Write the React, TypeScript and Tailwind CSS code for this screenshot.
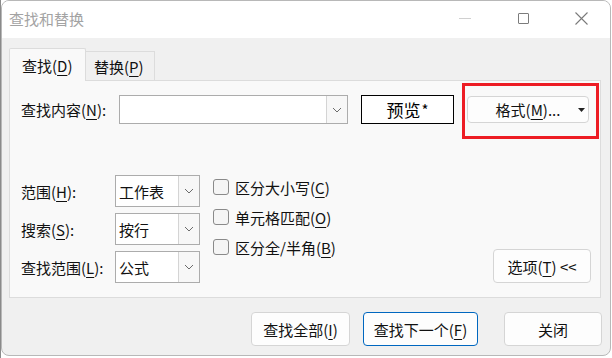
import React from "react";

const FONT = { fontFamily: '"Noto Sans CJK SC", "Noto Sans", sans-serif' };

function U({ c }: { c: string }) {
  return <span className="underline underline-offset-[3px] decoration-1">{c}</span>;
}

function Chevron() {
  return (
    <svg width="10" height="6" viewBox="0 0 10 6" fill="none">
      <path d="M1 1 L5 5 L9 1" stroke="#6b6b6b" strokeWidth="1" />
    </svg>
  );
}

function Select({ text, w, h }: { text: string; w: number; h: number }) {
  return (
    <div
      className="flex border border-[#acacac] bg-white"
      style={{ width: w, height: h }}
    >
      <div className="flex-1 flex items-center pl-[3px] text-[15px] leading-none text-[#111]">{text}</div>
      <div className="w-[21px] border-l border-[#d4d4d4] bg-[#f7f7f7] flex items-center justify-center">
        <Chevron />
      </div>
    </div>
  );
}

function Check({ children }: { children: React.ReactNode }) {
  return (
    <div className="flex items-center h-[16px]">
      <div className="w-[16px] h-[16px] rounded-[3px] border border-[#8a8a8a] bg-[#f5f5f5]" />
      <div className="ml-[6px] text-[15px] leading-none text-[#111]">{children}</div>
    </div>
  );
}

function Btn({ children, w, blue }: { children: React.ReactNode; w: number; blue?: boolean }) {
  return (
    <div
      className={
        "h-[34px] rounded-[4px] bg-[#fdfdfd] flex items-center justify-center text-[15px] leading-none text-[#111] border " +
        (blue ? "border-[#0067c0]" : "border-[#d5d5d5]")
      }
      style={{ width: w }}
    >
      {children}
    </div>
  );
}

export default function App() {
  return (
    <div className="w-[612px] h-[358px] bg-white overflow-hidden relative" style={FONT}>
      <div className="absolute left-0 top-0 w-px h-[358px] bg-[#8a8a8a]" />
      <div className="ml-px w-[610px] h-[356px] rounded-[8px] border border-[#b8b8b8] bg-[#f0f0f0] overflow-hidden flex flex-col">
        {/* title bar */}
        <div className="h-[37px] bg-white flex items-center shrink-0">
          <div className="pl-[7px] text-[15px] leading-none text-[#a3a3a3] -mt-[2px]">查找和替换</div>
          <div className="ml-auto flex h-full">
            <div className="w-[58px] flex items-center justify-center">
              <div className="w-[12px] h-px bg-[#d0d0d0] -mt-[2px]" />
            </div>
            <div className="w-[58px] flex items-center justify-center">
              <div className="w-[11px] h-[11px] border border-[#7c7c7c] rounded-[1px] -mt-[2px]" />
            </div>
            <div className="w-[58px] flex items-center justify-center">
              <svg width="13" height="13" viewBox="0 0 13 13" className="-mt-[2px]">
                <path d="M0.5 0.5 L12.5 12.5 M12.5 0.5 L0.5 12.5" stroke="#7a7a7a" strokeWidth="1.1" />
              </svg>
            </div>
          </div>
        </div>

        {/* body */}
        <div className="flex-1 flex flex-col pl-[7px] pr-[9px] pt-[10px]">
          {/* tabs */}
          <div className="flex items-end h-[32px]">
            <div className="relative z-10 w-[77px] h-[33px] -mb-px bg-[#f9f9f9] border border-b-0 border-[#dcdcdc] rounded-t-[2px] flex items-center pl-[12px] text-[15px] leading-none text-[#111]">
              查找(<U c="D" />)
            </div>
            <div className="w-[69px] h-[29px] bg-[#f0f0f0] border border-l-0 border-b-0 border-[#dcdcdc] flex items-center pl-[8px] text-[15px] leading-none text-[#111]">
              替换(<U c="P" />)
            </div>
          </div>

          {/* panel */}
          <div className="h-[218px] bg-[#f9f9f9] border border-[#dcdcdc] flex flex-col">
            {/* row 1 */}
            <div className="flex items-start mt-[2px] h-[56px]">
              <div className="w-[98px] ml-[11px] mt-[12px] h-[29px] flex items-center text-[15px] leading-none text-[#111]">
                查找内容(<U c="N" />):
              </div>
              <div className="mt-[12px]">
                <Select text="" w={229} h={29} />
              </div>
              <div className="ml-[13px] mt-[12px] w-[93px] h-[29px] border border-black bg-white flex items-center justify-center text-[17px] leading-none text-black">
                预览<span className="text-[15px] ml-[1px]">*</span>
              </div>
              <div className="ml-[8px] w-[137px] h-[56px] border-[3px] border-[#ed1c24] pl-[2px] pt-[10px]">
                <div className="relative w-[122px] h-[27px] rounded-[4px] bg-[#fdfdfd] border border-[#d5d5d5] flex items-center justify-center text-[15px] leading-none text-[#111]">
                  格式(<U c="M" />)...
                  <svg width="7" height="4" viewBox="0 0 7 4" className="absolute right-[3px] top-[11px]">
                    <path d="M0 0 L7 0 L3.5 4 Z" fill="#222" />
                  </svg>
                </div>
              </div>
            </div>

            {/* row 2 */}
            <div className="flex items-end mt-[36px]">
              <div className="flex flex-col gap-[6px] ml-[11px]">
                {[
                  { l: <>范围(<U c="H" />):</>, t: "工作表" },
                  { l: <>搜索(<U c="S" />):</>, t: "按行" },
                  { l: <>查找范围(<U c="L" />):</>, t: "公式" },
                ].map((r, i) => (
                  <div key={i} className="flex items-center h-[32px]">
                    <div className="w-[94px] text-[15px] leading-none text-[#111]">{r.l}</div>
                    <Select text={r.t} w={85} h={32} />
                  </div>
                ))}
              </div>
              <div className="self-start ml-[13px] mt-[4px] flex flex-col gap-[14px]">
                <Check>区分大小写(<U c="C" />)</Check>
                <Check>单元格匹配(<U c="O" />)</Check>
                <Check>区分全/半角(<U c="B" />)</Check>
              </div>
              <div className="ml-auto mr-[9px]">
                <Btn w={98}>
                  选项(<U c="T" />)&nbsp;&lt;&lt;
                </Btn>
              </div>
            </div>
          </div>

          {/* bottom buttons */}
          <div className="flex justify-end mt-[14px] pr-[0px]">
            <Btn w={99}>
              查找全部(<U c="I" />)
            </Btn>
            <div className="ml-[13px]">
              <Btn w={115} blue>
                查找下一个(<U c="F" />)
              </Btn>
            </div>
            <div className="ml-[26px] -mr-[1px]">
              <Btn w={98}>关闭</Btn>
            </div>
          </div>
        </div>
      </div>
    </div>
  );
}
